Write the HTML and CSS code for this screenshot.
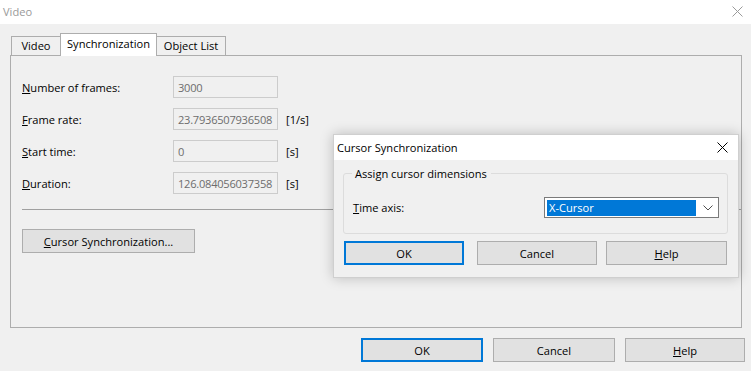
FILE: index.html
```html
<!DOCTYPE html>
<html>
<head>
<meta charset="utf-8">
<link rel="stylesheet" href="styles.css">
</head>
<body>
<div class="window">
  <div class="titlebar">
    <span class="title">Video</span>
    <svg class="close" width="11" height="11" viewBox="0 0 11 11"><path d="M0.5 0.5L10.5 10.5M10.5 0.5L0.5 10.5" stroke="#9a9a9a" stroke-width="1" fill="none"/></svg>
  </div>
  <div class="content">
    <div class="tabs">
      <div class="tab tab-video">Video</div>
      <div class="tab tab-active">Synchronization</div>
      <div class="tab tab-objects">Object List</div>
    </div>
    <div class="panel">
      <div class="row">
        <span class="label"><u>N</u>umber of frames:</span>
        <span class="field">3000</span>
      </div>
      <div class="row">
        <span class="label"><u>F</u>rame rate:</span>
        <span class="field">23.7936507936508</span>
        <span class="unit">[1/s]</span>
      </div>
      <div class="row">
        <span class="label"><u>S</u>tart time:</span>
        <span class="field">0</span>
        <span class="unit">[s]</span>
      </div>
      <div class="row">
        <span class="label"><u>D</u>uration:</span>
        <span class="field">126.084056037358</span>
        <span class="unit">[s]</span>
      </div>
      <div class="separator"></div>
      <button class="btn btn-sync"><u>C</u>ursor Synchronization...</button>
    </div>
    <div class="footer">
      <button class="btn btn-default">OK</button>
      <button class="btn">Cancel</button>
      <button class="btn btn-help"><u>H</u>elp</button>
    </div>
  </div>

  <div class="popup">
    <div class="popup-title">
      <span>Cursor Synchronization</span>
      <svg class="popup-close" width="11" height="11" viewBox="0 0 11 11"><path d="M0.5 0.5L10.5 10.5M10.5 0.5L0.5 10.5" stroke="#000" stroke-width="1" fill="none"/></svg>
    </div>
    <div class="popup-body">
      <div class="group">
        <span class="legend">Assign cursor dimensions</span>
        <div class="group-row">
          <span class="label"><u>T</u>ime axis:</span>
          <div class="combo">
            <span class="combo-sel">X-Cursor</span>
            <svg class="chevron" width="10" height="6" viewBox="0 0 10 6"><path d="M0.5 0.5L5 5L9.5 0.5" stroke="#505050" stroke-width="1" fill="none"/></svg>
          </div>
        </div>
      </div>
      <div class="popup-buttons">
        <button class="btn btn-default">OK</button>
        <button class="btn">Cancel</button>
        <button class="btn"><u>H</u>elp</button>
      </div>
    </div>
  </div>
</div>
</body>
</html>
```

FILE: styles.css
```css
* { box-sizing: border-box; }
html, body {
  margin: 0;
  padding: 0;
  background: #f0f0f0;
  font-family: "Open Sans", "Noto Sans", sans-serif;
  font-size: 11.1px;
  color: #000;
}
.window {
  position: relative;
  width: 751px;
  height: 371px;
  overflow: hidden;
}
.titlebar {
  height: 24px;
  background: #fff;
  display: flex;
  align-items: center;
  justify-content: space-between;
  padding: 0 8px 2px 3px;
}
.title { color: #999; }
.content {
  padding: 9px 9px 0 10px;
}
.tabs {
  display: flex;
  align-items: flex-end;
  height: 22px;
  padding-left: 1px;
}
.tab {
  height: 19px;
  border: 1px solid #adadad;
  border-bottom: none;
  background: #f0f0f0;
  display: flex;
  align-items: center;
  justify-content: center;
  padding: 0;
  line-height: 1;
  white-space: nowrap;
}
.tab-video { width: 49px; border-right: none; }
.tab-active {
  height: 23px;
  margin-bottom: -1px;
  width: 97px;
  background: #fff;
  position: relative;
  z-index: 1;
  padding-bottom: 3px;
}
.tab-objects { width: 69px; border-left: none; }
.panel {
  height: 273px;
  border: 1px solid #adadad;
  padding: 20px 11px 0 11px;
}
.row {
  display: flex;
  align-items: center;
  height: 22px;
  margin-bottom: 10px;
}
.label {
  width: 151px;
  flex: none;
}
.field {
  width: 105px;
  height: 22px;
  border: 1px solid #cccccc;
  color: #6d6d6d;
  display: flex;
  align-items: center;
  padding-left: 4px;
  flex: none;
  white-space: nowrap;
  overflow: hidden;
  letter-spacing: -0.25px;
}
.unit { margin-left: 8px; }
.separator {
  height: 1px;
  background: #a0a0a0;
  margin: 15px -11px 19px 0;
}
.btn {
  font: inherit;
  color: #000;
  background: #e1e1e1;
  border: 1px solid #adadad;
  height: 24px;
  padding: 0;
  display: flex;
  align-items: center;
  justify-content: center;
}
.btn-sync { width: 173px; }
.btn-default { border: 2px solid #0078d7; }
.footer {
  display: flex;
  justify-content: flex-end;
  gap: 10px;
  margin-top: 10px;
  margin-right: -3px;
}
.footer .btn { width: 122px; }
.footer .btn-help { width: 120px; }

.popup {
  position: absolute;
  left: 333px;
  top: 134px;
  width: 406px;
  height: 144px;
  background: #f0f0f0;
  border: 1px solid #cfcfcf;
  box-shadow: 0 0 12px rgba(0,0,0,0.22);
}
.popup-title {
  height: 25px;
  background: #fff;
  display: flex;
  align-items: center;
  justify-content: space-between;
  padding: 0 10px 0 3px;
}
.popup-body { padding: 13px 10px 0 9px; }
.group {
  position: relative;
  height: 61px;
  border: 1px solid #dcdcdc;
  border-radius: 3px;
  padding: 23px 8px 0 9px;
}
.legend {
  position: absolute;
  left: 8px;
  top: -8px;
  background: #f0f0f0;
  padding: 0 4px 0 3px;
}
.group-row {
  display: flex;
  align-items: center;
  justify-content: space-between;
}
.combo {
  width: 175px;
  height: 21px;
  background: #fff;
  border: 1px solid #7a7a7a;
  display: flex;
  align-items: center;
  padding: 2px;
  gap: 7px;
}
.combo-sel {
  background: #0078d7;
  color: #fff;
  flex: 1;
  height: 16px;
  display: flex;
  align-items: center;
  padding-left: 2px;
}
.chevron { margin-right: 3px; }
.popup-buttons {
  display: flex;
  gap: 13px;
  margin-top: 7px;
  padding-left: 1px;
}
.popup-buttons .btn { width: 120px; height: 24px; }
.popup-buttons .btn:nth-child(3) { margin-left: -4px; width: 121px; }
```
